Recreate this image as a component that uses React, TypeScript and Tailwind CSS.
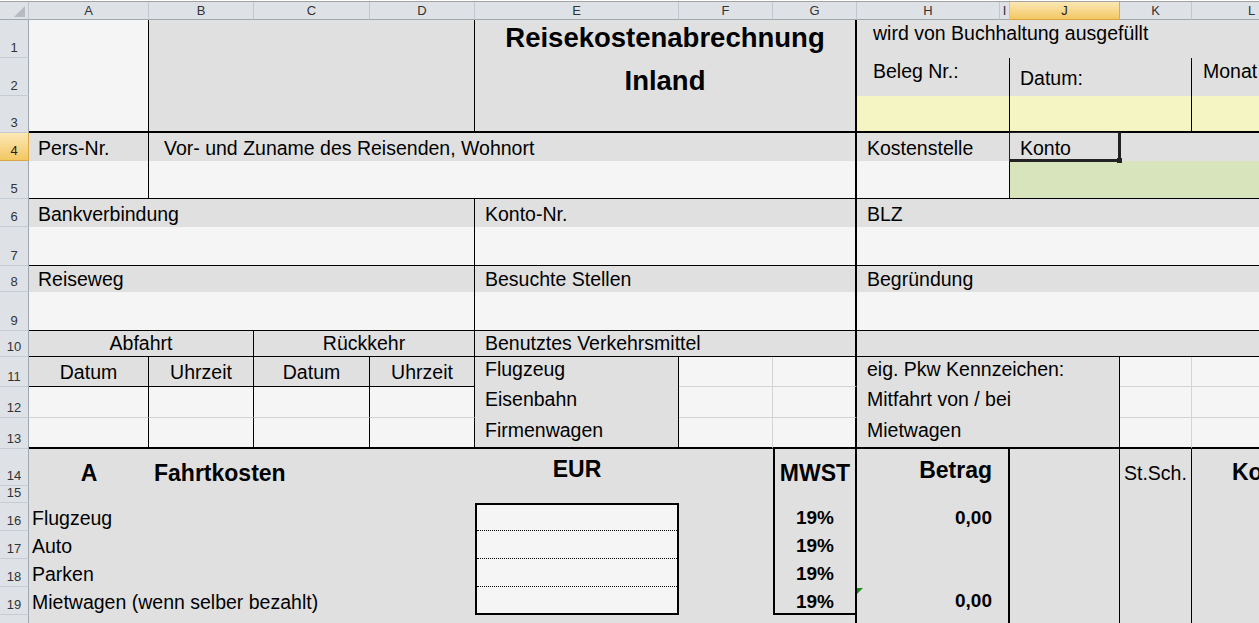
import type { ReactNode } from "react";

// cell fills
const GRAY = "bg-[#e0e0e0]";
const WHITE = "bg-[#f5f5f5]";
const YELLOW = "bg-[#f5f5c4]";
const GREEN = "bg-[#d8e4bc]";
// excel default: text sits on the bottom of the cell
const BOT = "items-end pb-[2px]";
const H1 = "text-[23px] leading-[26px] font-bold";
const H2 = "text-[19px] leading-[22px] font-bold";

const Cell = ({ className = "", children }: { className?: string; children?: ReactNode }) => (
  <div className={`flex min-w-0 overflow-hidden whitespace-nowrap ${className}`}>{children}</div>
);

const COLS = [
  { label: "A", pos: "col-start-2" },
  { label: "B", pos: "col-start-3" },
  { label: "C", pos: "col-start-4" },
  { label: "D", pos: "col-start-5" },
  { label: "E", pos: "col-start-6" },
  { label: "F", pos: "col-start-7" },
  { label: "G", pos: "col-start-8" },
  { label: "H", pos: "col-start-9" },
  { label: "I", pos: "col-start-10" },
  { label: "J", pos: "col-start-11", active: true },
  { label: "K", pos: "col-start-12" },
  { label: "L", pos: "col-start-13" },
];

const ROWS = [
  { n: 1, pos: "row-start-2" },
  { n: 2, pos: "row-start-3" },
  { n: 3, pos: "row-start-4" },
  { n: 4, pos: "row-start-5", active: true },
  { n: 5, pos: "row-start-6" },
  { n: 6, pos: "row-start-7" },
  { n: 7, pos: "row-start-8" },
  { n: 8, pos: "row-start-9" },
  { n: 9, pos: "row-start-10" },
  { n: 10, pos: "row-start-11" },
  { n: 11, pos: "row-start-12" },
  { n: 12, pos: "row-start-13" },
  { n: 13, pos: "row-start-14" },
  { n: 14, pos: "row-start-15" },
  { n: 15, pos: "row-start-16" },
  { n: 16, pos: "row-start-17" },
  { n: 17, pos: "row-start-18" },
  { n: 18, pos: "row-start-19" },
  { n: 19, pos: "row-start-20" },
  { n: 20, pos: "row-start-21" },
];

const Dotted = () => <div className="mt-auto h-0 w-full border-t border-dotted border-black" />;

export default function App() {
  return (
    <div className="h-[623px] w-[1259px] overflow-hidden bg-white pt-px font-['Liberation_Sans',Arial,sans-serif] text-black">
      <div className="grid w-[1312px] border-t border-t-[#a3a3a3] text-[19.5px] leading-[22px] grid-cols-[29px_120px_105px_116px_105px_204px_94px_84px_143px_10px_110px_72px_120px] grid-rows-[18px_38px_38px_37px_28px_38px_28px_39px_26px_39px_26px_30px_31px_31px_37px_17px_28px_28px_28px_28px_30px]">
        {/* corner */}
        <div className="relative col-start-1 row-start-1 border-r border-b border-r-[#c2c7ce] border-b-[#9ea6b0] bg-[#dee2e7]">
          <svg className="absolute right-[3px] bottom-[2px]" width="11" height="11" viewBox="0 0 11 11">
            <polygon points="11,0 11,11 0,11" fill="#b7bbc1" />
          </svg>
        </div>

        {/* column headers */}
        {COLS.map((c) => (
          <div
            key={c.label}
            className={`${c.pos} row-start-1 flex items-center justify-center border-r border-b text-[13px] leading-none ${
              c.active
                ? "bg-linear-to-b from-[#fbe8b4] to-[#f3c761] border-r-[#d9ad4f] border-b-[#d9a845] text-[#222]"
                : "bg-[#dee2e7] border-r-[#c2c7ce] border-b-[#9ea6b0] text-[#333]"
            }`}
          >
            {c.label}
          </div>
        ))}

        {/* row headers */}
        {ROWS.map((r) => (
          <div
            key={r.n}
            className={`${r.pos} col-start-1 flex items-end justify-center overflow-hidden border-r border-b pb-[2px] text-[13px] leading-[15px] ${
              r.active
                ? "bg-linear-to-b from-[#fbe8b4] to-[#f3c761] border-r-[#d9a845] border-b-[#d9a845] text-[#222]"
                : "bg-[#dee2e7] border-r-[#9ea6b0] border-b-[#c7ccd3] text-[#333]"
            }`}
          >
            {r.n}
          </div>
        ))}

        {/* rows 1-3 */}
        <Cell className={`col-start-2 row-start-2 row-span-3 ${WHITE} border-r border-b-2 border-black`} />
        <Cell className={`col-start-3 col-span-3 row-start-2 row-span-3 ${GRAY} border-r border-b-2 border-black`} />
        <Cell className={`col-start-6 col-span-3 row-start-2 row-span-3 ${GRAY} border-r-2 border-b-2 border-black flex-col items-center pt-[3px] text-[27.5px] leading-[30px] font-bold`}>
          <div>Reisekostenabrechnung</div>
          <div className="mt-[13px]">Inland</div>
        </Cell>
        <Cell className={`col-start-9 col-span-5 row-start-2 ${GRAY} items-start pt-[2px] pl-[16px]`}>wird von Buchhaltung ausgefüllt</Cell>
        <Cell className={`col-start-9 col-span-2 row-start-3 ${GRAY} border-r border-black items-start pt-[2px] pl-[16px]`}>Beleg Nr.:</Cell>
        <Cell className={`col-start-11 col-span-2 row-start-3 ${GRAY} border-r border-black items-start pt-[9px] pl-[10px]`}>Datum:</Cell>
        <Cell className={`col-start-13 row-start-3 ${GRAY} items-start pt-[2px] pl-[11px]`}>Monat</Cell>
        <Cell className={`col-start-9 col-span-2 row-start-4 ${YELLOW} border-r border-b-2 border-black`} />
        <Cell className={`col-start-11 col-span-2 row-start-4 ${YELLOW} border-r border-b-2 border-black`} />
        <Cell className={`col-start-13 row-start-4 ${YELLOW} border-b-2 border-black`} />

        {/* rows 4-5 */}
        <Cell className={`col-start-2 row-start-5 ${GRAY} border-r border-black ${BOT} pl-[9px]`}>Pers-Nr.</Cell>
        <Cell className={`col-start-3 col-span-6 row-start-5 ${GRAY} border-r-2 border-black ${BOT} pl-[15px]`}>Vor- und Zuname des Reisenden, Wohnort</Cell>
        <Cell className={`col-start-9 col-span-2 row-start-5 ${GRAY} ${BOT} pl-[10px]`}>Kostenstelle</Cell>
        <div className={`relative z-10 col-start-11 row-start-5 flex ${GRAY} ${BOT} pl-[10px]`}>
          Konto
          <div className="absolute -top-px -left-px -right-px -bottom-px border-t border-l border-r-[3px] border-b-[3px] border-[#222]" />
          <div className="absolute -right-[2px] -bottom-[2px] h-[5px] w-[5px] bg-[#222]" />
        </div>
        <Cell className={`col-start-12 col-span-2 row-start-5 ${GRAY}`} />
        <Cell className={`col-start-2 row-start-6 ${WHITE} border-r border-b border-black`} />
        <Cell className={`col-start-3 col-span-6 row-start-6 ${WHITE} border-r-2 border-b border-black`} />
        <Cell className={`col-start-9 col-span-2 row-start-6 ${WHITE} border-r border-b border-black`} />
        <Cell className={`col-start-11 col-span-3 row-start-6 ${GREEN} border-b border-black`} />

        {/* rows 6-7 */}
        <Cell className={`col-start-2 col-span-4 row-start-7 ${GRAY} border-r border-black ${BOT} pl-[9px]`}>Bankverbindung</Cell>
        <Cell className={`col-start-6 col-span-3 row-start-7 ${GRAY} border-r-2 border-black ${BOT} pl-[10px]`}>Konto-Nr.</Cell>
        <Cell className={`col-start-9 col-span-5 row-start-7 ${GRAY} ${BOT} pl-[10px]`}>BLZ</Cell>
        <Cell className={`col-start-2 col-span-4 row-start-8 ${WHITE} border-r border-b border-black`} />
        <Cell className={`col-start-6 col-span-3 row-start-8 ${WHITE} border-r-2 border-b border-black`} />
        <Cell className={`col-start-9 col-span-5 row-start-8 ${WHITE} border-b border-black`} />

        {/* rows 8-9 */}
        <Cell className={`col-start-2 col-span-4 row-start-9 ${GRAY} border-r border-black ${BOT} pl-[9px]`}>Reiseweg</Cell>
        <Cell className={`col-start-6 col-span-3 row-start-9 ${GRAY} border-r-2 border-black ${BOT} pl-[10px]`}>Besuchte Stellen</Cell>
        <Cell className={`col-start-9 col-span-5 row-start-9 ${GRAY} ${BOT} pl-[10px]`}>Begründung</Cell>
        <Cell className={`col-start-2 col-span-4 row-start-10 ${WHITE} border-r border-b border-black`} />
        <Cell className={`col-start-6 col-span-3 row-start-10 ${WHITE} border-r-2 border-b border-black`} />
        <Cell className={`col-start-9 col-span-5 row-start-10 ${WHITE} border-b border-black`} />

        {/* row 10 */}
        <Cell className={`col-start-2 col-span-2 row-start-11 ${GRAY} border-r border-b border-black ${BOT} justify-center`}>Abfahrt</Cell>
        <Cell className={`col-start-4 col-span-2 row-start-11 ${GRAY} border-r border-b border-black ${BOT} justify-center`}>Rückkehr</Cell>
        <Cell className={`col-start-6 col-span-3 row-start-11 ${GRAY} border-r-2 border-b border-black ${BOT} pl-[10px]`}>Benutztes Verkehrsmittel</Cell>
        <Cell className={`col-start-9 col-span-5 row-start-11 ${GRAY} border-b border-black`} />

        {/* row 11 */}
        <Cell className={`col-start-2 row-start-12 ${GRAY} border-r border-b border-black items-end pb-[3px] justify-center`}>Datum</Cell>
        <Cell className={`col-start-3 row-start-12 ${GRAY} border-r border-b border-black items-end pb-[3px] justify-center`}>Uhrzeit</Cell>
        <Cell className={`col-start-4 row-start-12 ${GRAY} border-r border-b border-black items-end pb-[3px] justify-center`}>Datum</Cell>
        <Cell className={`col-start-5 row-start-12 ${GRAY} border-r border-b border-black items-end pb-[3px] justify-center`}>Uhrzeit</Cell>
        <Cell className={`col-start-6 row-start-12 ${GRAY} border-r border-black items-start pt-[1px] pl-[10px]`}>Flugzeug</Cell>
        <Cell className={`col-start-7 row-start-12 ${WHITE} border-r border-b border-[#d4d4d4]`} />
        <Cell className={`col-start-8 row-start-12 ${WHITE} border-r-2 border-b border-r-black border-b-[#d4d4d4]`} />
        <Cell className={`col-start-9 col-span-3 row-start-12 ${GRAY} border-r border-black items-start pt-[1px] pl-[10px]`}>eig. Pkw Kennzeichen:</Cell>
        <Cell className={`col-start-12 row-start-12 ${WHITE} border-r border-b border-[#d4d4d4]`} />
        <Cell className={`col-start-13 row-start-12 ${WHITE} border-b border-[#d4d4d4]`} />

        {/* row 12 */}
        <Cell className={`col-start-2 row-start-13 ${WHITE} border-r border-b border-r-black border-b-[#d4d4d4]`} />
        <Cell className={`col-start-3 row-start-13 ${WHITE} border-r border-b border-r-black border-b-[#d4d4d4]`} />
        <Cell className={`col-start-4 row-start-13 ${WHITE} border-r border-b border-r-black border-b-[#d4d4d4]`} />
        <Cell className={`col-start-5 row-start-13 ${WHITE} border-r border-b border-r-black border-b-[#d4d4d4]`} />
        <Cell className={`col-start-6 row-start-13 ${GRAY} border-r border-black items-start pt-[1px] pl-[10px]`}>Eisenbahn</Cell>
        <Cell className={`col-start-7 row-start-13 ${WHITE} border-r border-b border-[#d4d4d4]`} />
        <Cell className={`col-start-8 row-start-13 ${WHITE} border-r-2 border-b border-r-black border-b-[#d4d4d4]`} />
        <Cell className={`col-start-9 col-span-3 row-start-13 ${GRAY} border-r border-black items-start pt-[1px] pl-[10px]`}>Mitfahrt von / bei</Cell>
        <Cell className={`col-start-12 row-start-13 ${WHITE} border-r border-b border-[#d4d4d4]`} />
        <Cell className={`col-start-13 row-start-13 ${WHITE} border-b border-[#d4d4d4]`} />

        {/* row 13 */}
        <Cell className={`col-start-2 row-start-14 ${WHITE} border-r border-b-2 border-black`} />
        <Cell className={`col-start-3 row-start-14 ${WHITE} border-r border-b-2 border-black`} />
        <Cell className={`col-start-4 row-start-14 ${WHITE} border-r border-b-2 border-black`} />
        <Cell className={`col-start-5 row-start-14 ${WHITE} border-r border-b-2 border-black`} />
        <Cell className={`col-start-6 row-start-14 ${GRAY} border-r border-b-2 border-black items-start pt-[1px] pl-[10px]`}>Firmenwagen</Cell>
        <Cell className={`col-start-7 row-start-14 ${WHITE} border-r border-b-2 border-r-[#d4d4d4] border-b-black`} />
        <Cell className={`col-start-8 row-start-14 ${WHITE} border-r-2 border-b-2 border-black`} />
        <Cell className={`col-start-9 col-span-3 row-start-14 ${GRAY} border-r border-b-2 border-black items-start pt-[1px] pl-[10px]`}>Mietwagen</Cell>
        <Cell className={`col-start-12 row-start-14 ${WHITE} border-r border-b-2 border-r-[#d4d4d4] border-b-black`} />
        <Cell className={`col-start-13 row-start-14 ${WHITE} border-b-2 border-black`} />

        {/* row 14: section A */}
        <Cell className={`col-start-2 row-start-15 ${GRAY} items-start pt-[11px] justify-center ${H1}`}>A</Cell>
        <Cell className={`col-start-3 col-span-3 row-start-15 ${GRAY} items-start pt-[11px] pl-[5px] ${H1}`}>Fahrtkosten</Cell>
        <Cell className={`col-start-6 row-start-15 ${GRAY} items-start pt-[7px] justify-center ${H1}`}>EUR</Cell>
        <Cell className={`col-start-7 row-start-15 row-span-7 ${GRAY}`} />
        <Cell className={`col-start-8 row-start-15 ${GRAY} border-x-2 border-black items-start pt-[11px] justify-center ${H1}`}>MWST</Cell>
        <Cell className={`col-start-9 col-span-2 row-start-15 ${GRAY} border-r-2 border-black items-start pt-[8px] justify-end pr-[16px] ${H1}`}>Betrag</Cell>
        <Cell className={`col-start-11 row-start-15 row-span-7 ${GRAY} border-r border-black`} />
        <Cell className={`col-start-12 row-start-15 row-span-7 ${GRAY} border-r border-black items-start pt-[13px] pl-[4px]`}>
          <span className="h-fit">St.Sch.</span>
        </Cell>
        <Cell className={`col-start-13 row-start-15 row-span-7 ${GRAY} items-start pt-[10px] pl-[40px] ${H1}`}>
          <span className="h-fit">Konto</span>
        </Cell>

        {/* row 15 */}
        <Cell className={`col-start-2 col-span-5 row-start-16 ${GRAY}`} />
        <Cell className={`col-start-8 row-start-16 ${GRAY} border-x-2 border-black`} />
        <Cell className={`col-start-9 col-span-2 row-start-16 ${GRAY} border-r-2 border-black`} />

        {/* rows 16-19 */}
        <Cell className={`col-start-2 col-span-4 row-start-17 ${GRAY} ${BOT} pl-[3px]`}>Flugzeug</Cell>
        <Cell className={`col-start-2 col-span-4 row-start-18 ${GRAY} ${BOT} pl-[3px]`}>Auto</Cell>
        <Cell className={`col-start-2 col-span-4 row-start-19 ${GRAY} ${BOT} pl-[3px]`}>Parken</Cell>
        <Cell className={`col-start-2 col-span-4 row-start-20 ${GRAY} ${BOT} pl-[3px]`}>Mietwagen (wenn selber bezahlt)</Cell>
        <Cell className={`col-start-2 col-span-5 row-start-21 ${GRAY}`} />

        <Cell className={`col-start-6 row-start-17 ${WHITE} border-x-2 border-t-2 border-black flex-col`}>
          <Dotted />
        </Cell>
        <Cell className={`col-start-6 row-start-18 ${WHITE} border-x-2 border-black flex-col`}>
          <Dotted />
        </Cell>
        <Cell className={`col-start-6 row-start-19 ${WHITE} border-x-2 border-black flex-col`}>
          <Dotted />
        </Cell>
        <Cell className={`col-start-6 row-start-20 ${WHITE} border-x-2 border-b-2 border-black`} />

        <Cell className={`col-start-8 row-start-17 ${GRAY} border-x-2 border-black ${BOT} justify-center ${H2}`}>19%</Cell>
        <Cell className={`col-start-8 row-start-18 ${GRAY} border-x-2 border-black ${BOT} justify-center ${H2}`}>19%</Cell>
        <Cell className={`col-start-8 row-start-19 ${GRAY} border-x-2 border-black ${BOT} justify-center ${H2}`}>19%</Cell>
        <Cell className={`col-start-8 row-start-20 ${GRAY} border-x-2 border-b-2 border-black items-end pb-0 justify-center ${H2}`}>19%</Cell>
        <Cell className={`col-start-8 row-start-21 ${GRAY} border-r-2 border-black`} />

        <Cell className={`col-start-9 col-span-2 row-start-17 ${GRAY} border-r-2 border-black ${BOT} justify-end pr-[16px] ${H2}`}>0,00</Cell>
        <Cell className={`col-start-9 col-span-2 row-start-18 row-span-2 ${GRAY} border-r-2 border-black`} />
        <div className={`relative col-start-9 col-span-2 row-start-20 flex ${GRAY} border-r-2 border-black items-end pb-[3px] justify-end pr-[16px] ${H2}`}>
          <svg className="absolute top-px left-0" width="6" height="6" viewBox="0 0 6 6">
            <polygon points="0,0 6,0 0,6" fill="#1e8a1e" />
          </svg>
          0,00
        </div>
        <Cell className={`col-start-9 col-span-2 row-start-21 ${GRAY} border-r-2 border-black`} />
      </div>
    </div>
  );
}
